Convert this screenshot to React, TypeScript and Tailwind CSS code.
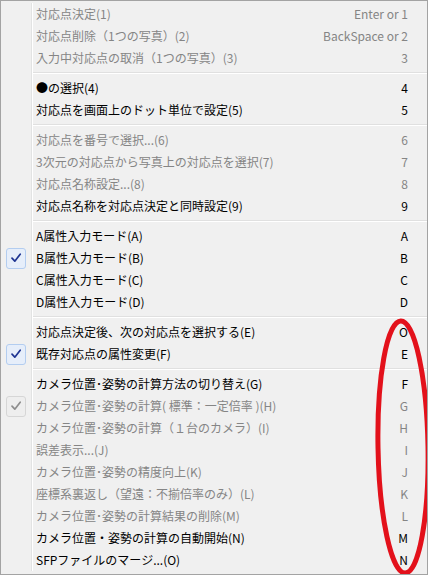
type Item = {
  label: string;
  key: string;
  disabled?: boolean;
  checked?: boolean;
};

const groups: Item[][] = [
  [
    { label: '対応点決定(1)', key: 'Enter or 1', disabled: true },
    { label: '対応点削除（1つの写真）(2)', key: 'BackSpace or 2', disabled: true },
    { label: '入力中対応点の取消（1つの写真）(3)', key: '3', disabled: true },
  ],
  [
    { label: '●の選択(4)', key: '4' },
    { label: '対応点を画面上のドット単位で設定(5)', key: '5' },
  ],
  [
    { label: '対応点を番号で選択...(6)', key: '6', disabled: true },
    { label: '3次元の対応点から写真上の対応点を選択(7)', key: '7', disabled: true },
    { label: '対応点名称設定...(8)', key: '8', disabled: true },
    { label: '対応点名称を対応点決定と同時設定(9)', key: '9' },
  ],
  [
    { label: 'A属性入力モード(A)', key: 'A' },
    { label: 'B属性入力モード(B)', key: 'B', checked: true },
    { label: 'C属性入力モード(C)', key: 'C' },
    { label: 'D属性入力モード(D)', key: 'D' },
  ],
  [
    { label: '対応点決定後、次の対応点を選択する(E)', key: 'O' },
    { label: '既存対応点の属性変更(F)', key: 'E', checked: true },
  ],
  [
    { label: 'カメラ位置･姿勢の計算方法の切り替え(G)', key: 'F' },
    { label: 'カメラ位置･姿勢の計算( 標準：一定倍率 )(H)', key: 'G', disabled: true, checked: true },
    { label: 'カメラ位置･姿勢の計算（１台のカメラ）(I)', key: 'H', disabled: true },
    { label: '誤差表示...(J)', key: 'I', disabled: true },
    { label: 'カメラ位置･姿勢の精度向上(K)', key: 'J', disabled: true },
    { label: '座標系裏返し（望遠：不揃倍率のみ）(L)', key: 'K', disabled: true },
    { label: 'カメラ位置･姿勢の計算結果の削除(M)', key: 'L', disabled: true },
    { label: 'カメラ位置・姿勢の計算の自動開始(N)', key: 'M' },
    { label: 'SFPファイルのマージ...(O)', key: 'N' },
  ],
];

function Gutter({ children }: { children?: React.ReactNode }) {
  return (
    <>
      <div className="w-[30px] h-full shrink-0 flex items-center justify-center">{children}</div>
      <div className="w-px h-full bg-[#e2e3e3] shrink-0" />
      <div className="w-px h-full bg-white shrink-0" />
    </>
  );
}

function Check({ disabled }: { disabled?: boolean }) {
  return (
    <div
      className={
        disabled
          ? 'w-[20px] h-[21px] rounded-[3px] border border-[#d6d6d6] bg-[#eeeeee] flex items-center justify-center'
          : 'w-[20px] h-[21px] rounded-[3px] border border-[#b3cdf0] bg-[#e6eefa] flex items-center justify-center'
      }
    >
      <svg width="12" height="12" viewBox="0 0 12 12">
        <path
          d="M2 6.2 L4.8 9.2 L10.2 2.2"
          fill="none"
          stroke={disabled ? '#8e8e8e' : '#1f3592'}
          strokeWidth="1.7"
          strokeLinecap="round"
          strokeLinejoin="round"
        />
      </svg>
    </div>
  );
}

function Row({ item }: { item: Item }) {
  const color = item.disabled ? 'text-[#858585]' : 'text-black';
  return (
    <div className={`flex h-[22px] items-center ${color}`}>
      <Gutter>{item.checked && <Check disabled={item.disabled} />}</Gutter>
      <div className="flex-1 pl-[3px] whitespace-nowrap">{item.label}</div>
      <div className="pr-[19px] whitespace-nowrap">{item.key}</div>
    </div>
  );
}

function Separator() {
  return (
    <div className="flex h-[8px] items-center">
      <Gutter />
      <div className="flex-1 h-[2px] border-t border-[#e0e0e0] border-b border-b-white" />
    </div>
  );
}

export default function App() {
  return (
    <div className="relative w-[428px] h-[575px] overflow-hidden border border-[#a3a3a3] bg-[#f0f0f0] pt-[2px] text-[12px] leading-none font-[family-name:'Noto_Sans_CJK_JP',sans-serif]">
      {groups.map((g, gi) => (
        <div key={gi}>
          {gi > 0 && <Separator />}
          {g.map((it) => (
            <Row key={it.label} item={it} />
          ))}
        </div>
      ))}

      {/* 赤丸の注釈 */}
      <svg className="absolute left-0 top-0 pointer-events-none" width="428" height="575">
        <ellipse
          cx="402"
          cy="446"
          rx="25"
          ry="126"
          transform="rotate(-1 402 446)"
          fill="none"
          stroke="#e3111b"
          strokeWidth="5"
        />
      </svg>
    </div>
  );
}
